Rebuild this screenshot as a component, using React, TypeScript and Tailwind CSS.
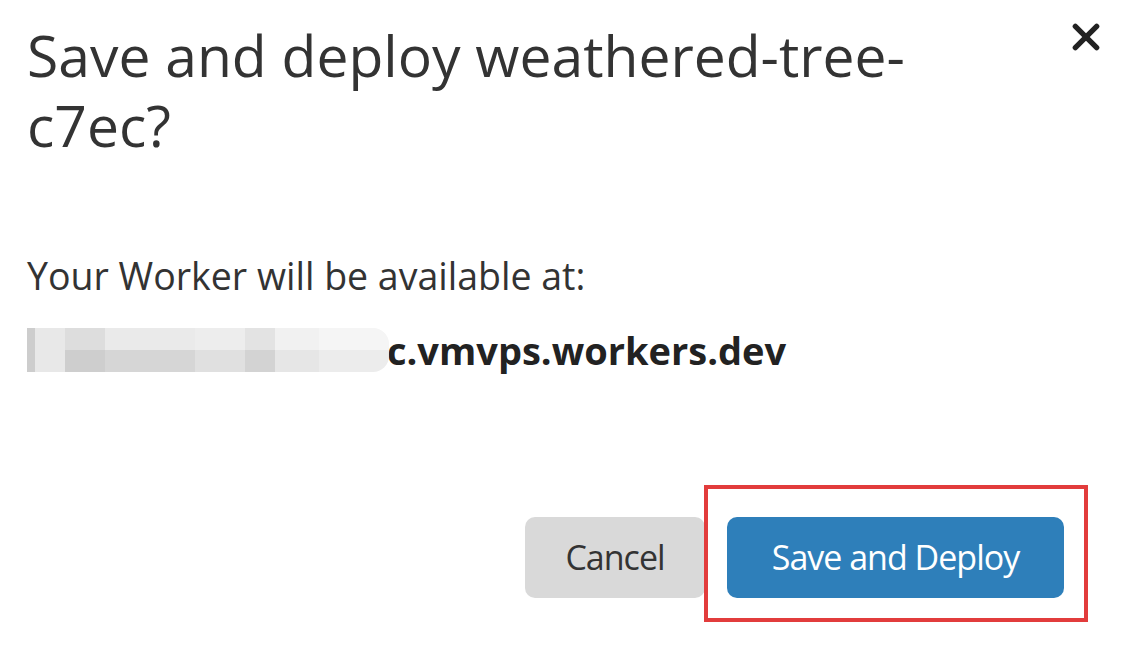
import React from "react";

export default function App() {
  return (
    <div className="w-[1122px] h-[656px] bg-white relative overflow-hidden text-[#333333]" style={{ fontFamily: '"Open Sans", "Noto Sans", sans-serif' }}>
      <div className="flex flex-col pl-[27px] pr-[40px] pt-[20px]">
        <div className="flex justify-between items-start">
          <h1 className="text-[57px] leading-[70px] tracking-[0px] w-[920px] font-normal text-[#333]">
            Save and deploy weathered-tree-<br />c7ec?
          </h1>
          <button className="-mt-[3px] -mr-[24px] w-[40px] h-[40px] flex items-center justify-center" aria-label="Close">
            <svg width="32" height="32" viewBox="0 0 30 30">
              <path d="M5 5 L25 25 M25 5 L5 25" stroke="#222" strokeWidth="5" strokeLinecap="round" />
            </svg>
          </button>
        </div>
        <p className="mt-[92px] text-[37.5px] leading-[48px] tracking-[0px]">Your Worker will be available at:</p>
        <div className="mt-[26px] flex items-center h-[48px]">
          <div className="flex h-[44px] w-[362px] opacity-90">
            <div className="w-[8px] bg-[#c8c8c8]" />
            <div className="w-[30px] bg-[#e6e6e6]" />
            <div className="w-[40px] flex flex-col"><div className="h-1/2 bg-[#dadada]" /><div className="h-1/2 bg-[#c9c9c9]" /></div>
            <div className="w-[90px] flex flex-col"><div className="h-1/2 bg-[#e8e8e8]" /><div className="h-1/2 bg-[#d2d2d2]" /></div>
            <div className="w-[50px] flex flex-col"><div className="h-1/2 bg-[#ececec]" /><div className="h-1/2 bg-[#dddddd]" /></div>
            <div className="w-[30px] flex flex-col"><div className="h-1/2 bg-[#e0e0e0]" /><div className="h-1/2 bg-[#cfcfcf]" /></div>
            <div className="w-[44px] flex flex-col"><div className="h-1/2 bg-[#f0f0f0]" /><div className="h-1/2 bg-[#e4e4e4]" /></div>
            <div className="w-[70px] flex flex-col rounded-r-[16px] overflow-hidden"><div className="h-1/2 bg-[#f4f4f4]" /><div className="h-1/2 bg-[#ebebeb]" /></div>
          </div>
          <span className="font-bold text-[38px] tracking-[0px] text-[#222] ml-[-2px]">c.vmvps.workers.dev</span>
        </div>
        <div className="mt-[143px] flex justify-end items-center pr-[18px]">
          <button className="w-[180px] h-[81px] rounded-[10px] bg-[#d9d9d9] text-[34px] tracking-[-1px] text-[#333] mr-[22px]">Cancel</button>
          <div className="relative">
            <div className="absolute left-[-23px] top-[-32px] w-[384px] h-[137px] border-[4px] border-[#e23c3c]" />
            <button className="w-[337px] h-[81px] rounded-[10px] bg-[#2e7fba] text-[34px] tracking-[-1px] text-white">Save and Deploy</button>
          </div>
        </div>
      </div>
    </div>
  );
}
